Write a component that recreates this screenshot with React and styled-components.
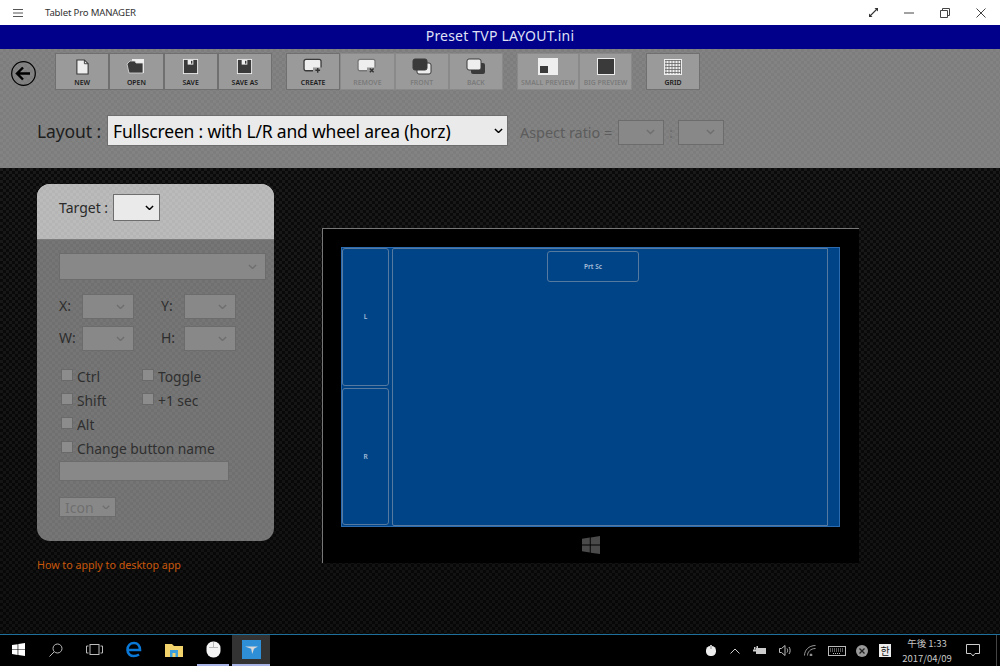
import React from "react";
import styled, { createGlobalStyle } from "styled-components";

const Global = createGlobalStyle`
  html, body { margin: 0; padding: 0; width: 1000px; height: 666px; overflow: hidden; background: #000; }
  * { box-sizing: border-box; }
  body { font-family: "Noto Sans", "Open Sans", sans-serif; }
`;

const Page = styled.div`
  width: 1000px; height: 666px; display: flex; flex-direction: column; overflow: hidden;
`;
const TitleBar = styled.div`
  height: 25px; flex: none; background: #fff; display: flex; align-items: center; color: #333;
`;
const Burger = styled.div`
  width: 45px; flex: none; display: flex; padding-left: 13px; color: #555;
`;
const AppName = styled.div`
  font-size: 9.6px; flex: 1; letter-spacing: -.17px; padding-bottom: 1px;
`;
const WinCtl = styled.div`
  width: 36px; height: 25px; display: flex; align-items: center; justify-content: center; flex: none;
`;
const WinCtls = styled.div`
  display: flex; padding-right: 1px;
`;
const Banner = styled.div`
  height: 24px; flex: none; background: #00008b; color: #dfe0f5; font-size: 14px; text-align: center;
  line-height: 22px; letter-spacing: .2px;
`;
const TopPanel = styled.div`
  height: 119px; flex: none; padding: 4px 0 0 11px;
  background-color: #808080;
  background-image: repeating-conic-gradient(#7d7d7d 0 25%, #838383 0 50%);
  background-size: 6px 6px;
`;
const ToolRow = styled.div`
  display: flex; align-items: flex-start;
`;
const BackButton = styled.div`
  width: 44px; flex: none; padding-top: 8px; color: #000; display: flex;
`;
const ToolGroup = styled.div`
  display: flex; margin-right: 14px;
`;
const ToolBtn = styled.div`
  width: ${p => p.$w || 54.25}px; height: 37px; flex: none;
  background: #9a9a9a; border: 1px solid ${p => (p.$off ? "#8a8a8a" : "#707070")};
  display: flex; flex-direction: column; align-items: center; justify-content: flex-start;
  padding-top: 4px;
  color: ${p => (p.$off ? "#7a7a7a" : "#1a1a1a")};
`;
const IconSlot = styled.div`
  height: 17px; display: flex; align-items: center; justify-content: center;
`;
const ToolLabel = styled.span`
  font-size: 6.9px; font-weight: 600; line-height: 9px; margin-top: 3px; white-space: nowrap;
`;
const LayoutRow = styled.div`
  display: flex; align-items: center; margin-top: 25px; padding-left: 26px; height: 31px;
`;
const LayoutLabel = styled.span`
  font-size: 17.5px; color: #1e1e1e; width: 70px; flex: none; white-space: nowrap; letter-spacing: -.1px;
`;
const AspectGroup = styled.div`
  display: flex; align-items: center; margin-top: 3px;
`;
const AspectLabel = styled.span`
  font-size: 14.4px; color: #5c5c5c; margin: 0 5px 0 12px; white-space: nowrap; width: 93px; flex: none;
`;
const Colon = styled.span`
  font-size: 15px; color: #6a6a6a; width: 14px; text-align: center; flex: none;
`;
const Select = styled.div`
  display: flex; align-items: center; justify-content: space-between; flex: none;
  width: ${p => p.$w}px; height: ${p => p.$h || 25}px;
  padding: 0 ${p => p.$pad || 8}px 0 ${p => p.$left || 5}px;
  background: ${p => (p.$on ? "#eaeaea" : "#888")};
  border: 1px solid ${p => (p.$on ? "#6e6e6e" : "#6c6c6c")};
  color: ${p => (p.$on ? "#000" : "#6f6f6f")};
  font-size: ${p => p.$size || 14}px; letter-spacing: ${p => p.$track || 0}px; white-space: nowrap;
`;
const Main = styled.div`
  flex: 1; display: flex; align-items: flex-start; padding: 16px 0 0 37px;
  background-color: #111;
  background-image:
    linear-gradient(rgba(0,0,0,.0), rgba(0,0,0,.3)),
    repeating-conic-gradient(#0a0a0a 0 25%, #191919 0 50%);
  background-size: 100% 100%, 6px 6px;
`;
const SideCol = styled.div`
  width: 237px; flex: none; margin-right: 48px;
`;
const Card = styled.div`
  height: 357px; border-radius: 13px; overflow: hidden;
  background-color: #737373;
  background-image: repeating-conic-gradient(#707070 0 25%, #767676 0 50%);
  background-size: 6px 6px;
`;
const CardHead = styled.div`
  height: 56px; padding: 10px 0 0 22px; display: flex; align-items: flex-start;
  background-color: #b8b8b8;
  background-image: repeating-conic-gradient(#b5b5b5 0 25%, #bbb 0 50%);
  background-size: 6px 6px;
  border-bottom: 1px solid #7d7d7d;
`;
const TargetLabel = styled.span`
  font-size: 14px; color: #2a2a2a; width: 54px; flex: none; line-height: 27px;
`;
const CardBody = styled.div`
  padding: 13px 0 0 22px; color: #333; font-size: 14px;
`;
const Coords = styled.div`
  display: grid; grid-template-columns: 23px 52px 27px 23px 52px; row-gap: 7px; margin-top: 14px; align-items: center;
`;
const CoordLabel = styled.span`
  font-size: 14px; color: #2d2d2d; line-height: 23px; padding-bottom: 2px;
`;
const Checks = styled.div`
  display: grid; grid-template-columns: 81px auto; justify-content: start; margin-top: 13px; padding-left: 2px; grid-auto-rows: 24px; width: 190px;
`;
const Check = styled.label`
  display: flex; align-items: center; gap: 4px; font-size: 13.8px; color: #2f2f2f; white-space: nowrap; height: 24px;
  grid-column: ${p => (p.$wide ? "1 / -1" : "auto")};
`;
const Box = styled.span`
  width: 12px; height: 12px; flex: none; background: #8c8c8c; border: 1px solid #6a6a6a; margin-top: -3px;
`;
const NameInput = styled.div`
  width: 170px; height: 20px; margin-top: 1px; background: #888; border: 1px solid #6c6c6c;
`;
const IconSelectWrap = styled.div`
  margin-top: 16px;
`;
const Link = styled.div`
  color: #c9580b; font-size: 10.7px; margin-top: 17px; white-space: nowrap;
`;
const Device = styled.div`
  margin-top: 44px; width: 537px; height: 335px; background: #000; flex: none;
  border-top: 1px solid #777; border-left: 1px solid #777;
  padding: 18px 19px 0 18px; display: flex; flex-direction: column;
`;
const Screen = styled.div`
  height: 280px; background: #004488; border: 1px solid #2b6cb0; display: flex; gap: 3px; color: #b0c4dc;
`;
const SideKeys = styled.div`
  width: 47px; flex: none; display: flex; flex-direction: column; gap: 2px; padding-bottom: 1px;
`;
const Key = styled.div`
  flex: ${p => (p.$fill ? 1 : "none")};
  display: flex; align-items: center; justify-content: center;
  font-size: 6.5px; font-weight: 600; color: #a9bfd8;
  border: 1px solid #55799f; border-radius: 3px;
`;
const Touch = styled.div`
  flex: 1; border: 1px solid #55799f; border-radius: 2px 0 0 2px; display: flex; padding: 2px 0 0 154px;
`;
const PrtSc = styled(Key)`
  width: 92px; height: 31px;
`;
const Wheel = styled.div`
  width: 11px; flex: none; margin-left: -3px;
`;
const LogoSlot = styled.div`
  flex: 1; display: flex; align-items: center; justify-content: center;
`;
const Taskbar = styled.div`
  height: 32px; flex: none; background: #000; border-top: 1px solid #1f6f9c; display: flex; align-items: center; justify-content: space-between; color: #fff;
`;
const TaskLeft = styled.div`
  display: flex; align-items: stretch; height: 31px;
`;
const TaskItem = styled.div`
  width: ${p => p.$w || 38}px; display: flex; align-items: center; justify-content: center; flex: none;
  background: ${p => (p.$active ? "#333" : "transparent")};
  margin-left: ${p => p.$ml || 0}px;
  border-bottom: 2px solid ${p => (p.$run ? "#a9b4e6" : "transparent")};
`;
const Tray = styled.div`
  display: flex; align-items: center; height: 31px; color: #ccc;
`;
const TrayItem = styled.div`
  width: ${p => p.$w || 25}px; display: flex; align-items: center; justify-content: center; flex: none;
`;
const Clock = styled.div`
  width: 58px; flex: none; text-align: center; font-size: 9.5px; line-height: 15px; color: #c8c8c8;
  font-family: "Noto Sans CJK JP", "Noto Sans", sans-serif; white-space: nowrap;
`;
const Hangul = styled.span`
  width: 12px; height: 13px; background: #eee; color: #111; font-size: 10px; line-height: 13px; text-align: center;
  font-family: "Noto Sans CJK KR", sans-serif; display: block;
`;
const ShowDesktop = styled.div`
  width: 4px; height: 31px; margin-left: 6px; border-left: 1px solid #444; flex: none;
`;

const Chevron = ({ s = 9, c = "currentColor" }) => (
  <svg width={s} height={s * 0.6} viewBox="0 0 10 6" fill="none" stroke={c} strokeWidth="1.6"><path d="M1 1l4 4 4-4" /></svg>
);
const Page1 = ({ fill = "#eee" }) => (
  <svg width="15" height="16" viewBox="0 0 16 17"><path d="M2 1h8l4 4v11H2z" fill={fill} stroke="#3a3a3a" strokeWidth="1.2" /><path d="M10 1v4h4" fill="none" stroke="#3a3a3a" /></svg>
);
const OpenIcon = () => (
  <svg width="20" height="17" viewBox="0 0 20 17"><path d="M6 1h12v14H6z" fill="#eee" /><path d="M1 6l3-3h5l1 2h7v10H3z" fill="#3a3a3a" stroke="#ddd" strokeWidth=".8" /></svg>
);
const SaveIcon = () => (
  <svg width="17" height="17" viewBox="0 0 18 18"><path d="M1 1h16v16H1z" fill="#eee" /><path d="M2 2h14v14H2z" fill="#3a3a3a" /><path d="M6 2h6v5H6z" fill="#eee" /><path d="M9.500 3H11v3H9.500z" fill="#3a3a3a" /></svg>
);
const CreateIcon = ({ mark }) => (
  <svg width="22" height="17" viewBox="0 0 22 18"><rect x="1.500" y="1.500" width="18" height="12" rx="2" fill="#eee" stroke={mark === "x" ? "#777" : "#3a3a3a"} strokeWidth="1.400" /><rect x="11" y="10" width="10" height="7" fill="#9a9a9a" /><path d={mark === "x" ? "M14 11l4 4M18 11l-4 4" : "M16 10.500v5M13.500 13h5"} stroke="#333" strokeWidth="1.500" /></svg>
);
const StackIcon = ({ front }) => (
  <svg width="20" height="17" viewBox="0 0 20 17">
    {front ? <><rect x="5" y="5" width="14" height="11" rx="2" fill="#eee" stroke="#3a3a3a" /><rect x="1" y="1" width="14" height="11" rx="2" fill="#3a3a3a" stroke="#3a3a3a" /></> :
      <><rect x="5" y="5" width="14" height="11" rx="2" fill="#3a3a3a" /><rect x="1" y="1" width="14" height="11" rx="2" fill="#eee" stroke="#3a3a3a" /></>}
  </svg>
);
const SmallPrev = () => (
  <svg width="20" height="17" viewBox="0 0 20 17"><rect width="20" height="17" fill="#eee" /><rect x="2" y="8" width="8" height="7" fill="#3a3a3a" /></svg>
);
const BigPrev = () => (
  <svg width="18" height="17" viewBox="0 0 18 17"><rect width="18" height="17" fill="#eee" /><rect x="1" y="1" width="16" height="15" fill="#3a3a3a" /></svg>
);
const GridIcon = () => (
  <svg width="18" height="16" viewBox="0 0 18 16"><rect width="18" height="16" fill="#eee" /><path d="M1 1.500h16M1 4.500h16M1 7.500h16M1 10.500h16M1 13.500h16M2 1v14M5 1v14M8 1v14M11 1v14M14 1v14M16.500 1v14" stroke="#666" strokeWidth=".8" fill="none" /></svg>
);
const WinLogo = ({ s = 18, c = "#fff" }) => (
  <svg width={s} height={s} viewBox="0 0 18 18" fill={c}><path d="M0 2.700l7.800-1.100v7H0zM8.700 1.400L18 0v8.600H8.700zM0 9.500h7.800v7L0 15.300zM8.700 9.500H18V18l-9.300-1.300z" /></svg>
);

const tools1 = [["NEW", <Page1 />], ["OPEN", <OpenIcon />], ["SAVE", <SaveIcon />], ["SAVE AS", <SaveIcon />]];
const tools2 = [["CREATE", <CreateIcon />, false], ["REMOVE", <CreateIcon mark="x" />, true], ["FRONT", <StackIcon front />, true], ["BACK", <StackIcon />, true]];

const Tool = ({ label, icon, off, w }) => (
  <ToolBtn $off={off} $w={w}><IconSlot>{icon}</IconSlot><ToolLabel>{label}</ToolLabel></ToolBtn>
);

export default function App() {
  return (
    <Page>
      <Global />
      <TitleBar>
        <Burger><svg width="10" height="8" viewBox="0 0 10 8" stroke="currentColor"><path d="M0 .5h10M0 4h10M0 7.500h10" /></svg></Burger>
        <AppName>Tablet Pro MANAGER</AppName>
        <WinCtls>
          <WinCtl><svg width="11" height="11" viewBox="0 0 11 11" stroke="#333" strokeWidth="1.100" fill="#333"><path d="M2 9L9 2" /><path d="M6.500 1H10v3.500zM1 6.500V10h3.500z" stroke="none" /></svg></WinCtl>
          <WinCtl><svg width="10" height="2" viewBox="0 0 10 2" stroke="#444"><path d="M0 1h10" /></svg></WinCtl>
          <WinCtl><svg width="10" height="10" viewBox="0 0 10 10" stroke="#444" fill="none"><path d="M.5 2.500h7v7h-7zM2.500 2.500v-2h7v7h-2" /></svg></WinCtl>
          <WinCtl><svg width="10" height="10" viewBox="0 0 10 10" stroke="#444"><path d="M.5.500l9 9M9.500.500l-9 9" /></svg></WinCtl>
        </WinCtls>
      </TitleBar>
      <Banner>Preset TVP LAYOUT.ini</Banner>
      <TopPanel>
        <ToolRow>
          <BackButton>
            <svg width="25" height="25" viewBox="0 0 25 25" fill="none" stroke="#000"><circle cx="12.500" cy="12.500" r="11.800" strokeWidth="1.200" /><path d="M6 12.500h13M12 6.500l-6 6 6 6" strokeWidth="2.400" /></svg>
          </BackButton>
          <ToolGroup>
            {tools1.map(([t, i]) => <Tool key={t} label={t} icon={i} />)}
          </ToolGroup>
          <ToolGroup>
            {tools2.map(([t, i, off]) => <Tool key={t} label={t} icon={i} off={off} />)}
          </ToolGroup>
          <ToolGroup>
            <Tool off w={62} icon={<SmallPrev />} label="SMALL PREVIEW" />
            <Tool off w={53} icon={<BigPrev />} label="BIG PREVIEW" />
          </ToolGroup>
          <Tool w={54} icon={<GridIcon />} label="GRID" />
        </ToolRow>
        <LayoutRow>
          <LayoutLabel>Layout :</LayoutLabel>
          <Select $on $w={401} $h={31} $size={17.5} $track={-0.19} $pad={4}>
            Fullscreen : with L/R and wheel area (horz)
            <Chevron />
          </Select>
          <AspectGroup>
            <AspectLabel>Aspect ratio =</AspectLabel>
            <Select $w={46}><span /><Chevron /></Select>
            <Colon>:</Colon>
            <Select $w={46}><span /><Chevron /></Select>
          </AspectGroup>
        </LayoutRow>
      </TopPanel>
      <Main>
        <SideCol>
          <Card>
            <CardHead>
              <TargetLabel>Target :</TargetLabel>
              <Select $on $w={47} $h={27} $pad={5}><span /><Chevron /></Select>
            </CardHead>
            <CardBody>
              <Select $w={207} $h={27}><span /><Chevron /></Select>
              <Coords>
                <CoordLabel>X:</CoordLabel><Select $w={52}><span /><Chevron /></Select><span />
                <CoordLabel>Y:</CoordLabel><Select $w={52}><span /><Chevron /></Select>
                <CoordLabel>W:</CoordLabel><Select $w={52}><span /><Chevron /></Select><span />
                <CoordLabel>H:</CoordLabel><Select $w={52}><span /><Chevron /></Select>
              </Coords>
              <Checks>
                <Check><Box />Ctrl</Check>
                <Check><Box />Toggle</Check>
                <Check><Box />Shift</Check>
                <Check><Box />+1 sec</Check>
                <Check $wide><Box />Alt</Check>
                <Check $wide><Box />Change button name</Check>
              </Checks>
              <NameInput />
              <IconSelectWrap>
                <Select $w={57} $h={20} $size={14} $pad={5}>Icon<Chevron s={8} /></Select>
              </IconSelectWrap>
            </CardBody>
          </Card>
          <Link>How to apply to desktop app</Link>
        </SideCol>
        <Device>
          <Screen>
            <SideKeys>
              <Key $fill>L</Key>
              <Key $fill>R</Key>
            </SideKeys>
            <Touch><PrtSc>Prt Sc</PrtSc></Touch>
            <Wheel />
          </Screen>
          <LogoSlot><WinLogo s={18} c="#4a4a4a" /></LogoSlot>
        </Device>
      </Main>
      <Taskbar>
        <TaskLeft>
          <TaskItem $w={36}><WinLogo s={13} /></TaskItem>
          <TaskItem $w={40}>
            <svg width="14" height="14" viewBox="0 0 14 14" fill="none" stroke="#bbb" strokeWidth="1"><circle cx="8.500" cy="5.500" r="4.500" /><path d="M5 9l-4.500 4.500" /></svg>
          </TaskItem>
          <TaskItem $w={36}>
            <svg width="17" height="11" viewBox="0 0 17 11" fill="none" stroke="#bbb"><rect x="4" y=".5" width="9" height="10" /><path d="M2.500 2H.5v7h2M14.500 2h2v7h-2" /></svg>
          </TaskItem>
          <TaskItem $w={44}>
            <svg width="16" height="17" viewBox="0 0 16 16" fill="none" stroke="#0a78d7" strokeWidth="2.600"><path d="M2 8.500h12C14 4 11.500 1.500 8 1.500 4.200 1.500 1.500 4.500 1.500 8.500c0 3.800 3 6 6.300 6 2 0 3.700-.5 5.200-1.500" /></svg>
          </TaskItem>
          <TaskItem $w={36}>
            <svg width="18" height="14" viewBox="0 0 18 14"><path d="M0 1h7l2 2h9v11H0z" fill="#f3d36b" /><rect x="5" y="7" width="8" height="7" fill="#3ba0dc" /><rect x="7.500" y="10" width="3" height="4" fill="#f3d36b" /></svg>
          </TaskItem>
          <TaskItem $w={32} $ml={5} $run>
            <svg width="15" height="17" viewBox="0 0 15 17"><rect x=".5" y=".5" width="14" height="16" rx="6.500" fill="#f4f4f4" /><path d="M7.500 1v5M3 6.500h9" stroke="#aaa" strokeWidth=".8" fill="none" /></svg>
          </TaskItem>
          <TaskItem $w={38} $ml={3} $active $run>
            <svg width="19" height="19" viewBox="0 0 19 19"><rect width="19" height="19" fill="#2f8fd6" /><path d="M3 6.500h13l-4 2.200-1.800 5.300-1-5.300z" fill="#d8d8d8" /></svg>
          </TaskItem>
        </TaskLeft>
        <Tray>
          <TrayItem $w={22}><svg width="10" height="11" viewBox="0 0 10 11"><rect y="1" width="10" height="10" rx="4.500" fill="#eee" /><rect x="4" width="2" height="4" fill="#bbb" /></svg></TrayItem>
          <TrayItem><svg width="10" height="6" viewBox="0 0 10 6" fill="none" stroke="#ccc"><path d="M.5 5.500L5 1l4.500 4.500" /></svg></TrayItem>
          <TrayItem><svg width="13" height="9" viewBox="0 0 13 9" fill="#ccc"><rect x="3" y="2" width="10" height="6" /><rect y="3.500" width="3" height="2" /><path d="M1 1h1.500v2.500H1zM3.500 0H5v2H3.500z" /></svg></TrayItem>
          <TrayItem><svg width="12" height="11" viewBox="0 0 12 11" fill="none" stroke="#bbb"><path d="M.5 3.500h2L6 .5v10l-3.500-3h-2zM8 3.500c.8 1 .8 3 0 4M10 2c1.500 2 1.500 5 0 7" /></svg></TrayItem>
          <TrayItem><svg width="12" height="11" viewBox="0 0 12 11" fill="none" stroke="#999"><path d="M.5 10.500c0-5 4-10 11-10M3.500 10.500c0-3.500 3-7 8-7" /><circle cx="7" cy="10" r="1" fill="#999" /></svg></TrayItem>
          <TrayItem $w={30}><svg width="18" height="10" viewBox="0 0 18 10" fill="none" stroke="#bbb"><rect x=".5" y=".5" width="17" height="9" /><path d="M2 3h14M2 5h14M5 7.500h8" strokeDasharray="1 1" /></svg></TrayItem>
          <TrayItem $w={20}><svg width="12" height="12" viewBox="0 0 12 12"><circle cx="6" cy="6" r="6" fill="#9a9a9a" /><path d="M3.500 3.500l5 5M8.500 3.500l-5 5" stroke="#222" strokeWidth="1.300" /></svg></TrayItem>
          <TrayItem $w={26}><Hangul>한</Hangul></TrayItem>
          <Clock>午後 1:33<br />2017/04/09</Clock>
          <TrayItem $w={34}><svg width="14" height="13" viewBox="0 0 14 13" fill="none" stroke="#ccc"><path d="M.5.500h13v9H9l-2 2.500-2-2.500H.5z" /></svg></TrayItem>
          <ShowDesktop />
        </Tray>
      </Taskbar>
    </Page>
  );
}
